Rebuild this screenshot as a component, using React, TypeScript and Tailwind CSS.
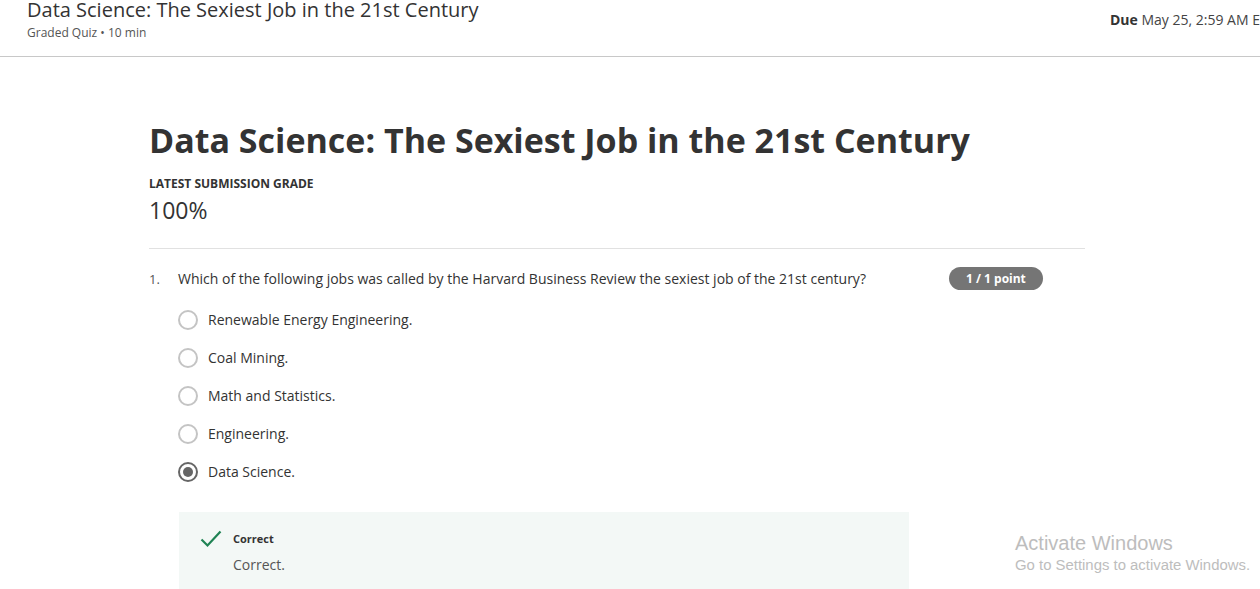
import React from 'react';

const options = [
  'Renewable Energy Engineering.',
  'Coal Mining.',
  'Math and Statistics.',
  'Engineering.',
  'Data Science.',
];

export default function App() {
  const selected = 4;

  return (
    <div className="relative h-[589px] w-[1260px] overflow-hidden bg-white text-[#333] font-['Open_Sans',sans-serif]">
      {/* Top header */}
      <header className="flex h-[57px] items-start justify-between border-b border-[#c8c8c8] pl-[27px]">
        <div>
          <h1 className="mt-[-3px] text-[20px] leading-[26px] text-[#333]">
            Data Science: The Sexiest Job in the 21st Century
          </h1>
          <p className="mt-[3px] text-[12px] leading-[14px] text-[#555]">Graded Quiz • 10 min</p>
        </div>
        <div className="mt-[10px] w-[150px] shrink-0 overflow-hidden whitespace-nowrap text-[14px] leading-[20px] text-[#444]">
          <span className="font-bold text-[#333]">Due</span> May 25, 2:59 AM EST
        </div>
      </header>

      {/* Main */}
      <main className="ml-[149px] w-[936px] pt-[61px]">
        <h2 className="text-[34px] font-bold leading-[44px] text-[#333]">
          Data Science: The Sexiest Job in the 21st Century
        </h2>
        <div className="mt-[14px] text-[12px] font-bold uppercase leading-[16px] text-[#333]">
          Latest Submission Grade
        </div>
        <div className="mt-[3px] text-[23px] leading-[30px] text-[#333]">100%</div>

        <div className="mt-[23px] border-t border-[#e1e1e1]" />

        {/* Question */}
        <div className="mt-[19px] flex items-start">
          <span className="w-[29px] text-[13px] leading-[22px] text-[#555]">1.</span>
          <p className="w-[740px] text-[14px] leading-[22px] text-[#333]">
            Which of the following jobs was called by the Harvard Business Review the sexiest job of the 21st century?
          </p>
          <span className="ml-[31px] mt-[-1px] rounded-full bg-[#757575] px-[17px] text-[12px] font-bold leading-[23px] text-white">
            1 / 1 point
          </span>
        </div>

        <div className="ml-[29px] mt-[20px] flex flex-col gap-[18px]">
          {options.map((o, i) => (
            <div key={o} className="flex h-[20px] items-center">
              <span
                className={
                  i === selected
                    ? 'flex h-[20px] w-[20px] items-center justify-center rounded-full border-2 border-[#666]'
                    : 'h-[20px] w-[20px] rounded-full border-2 border-[#c4c4c4]'
                }
              >
                {i === selected && <span className="h-[10px] w-[10px] rounded-full bg-[#666]" />}
              </span>
              <span className="ml-[10px] text-[14px] leading-[20px] text-[#333]">{o}</span>
            </div>
          ))}
        </div>

        {/* Feedback */}
        <div className="ml-[30px] mt-[30px] flex w-[730px] bg-[#f3f8f6] pb-[20px] pl-[21px] pt-[18px]">
          <svg width="22" height="18" viewBox="0 0 22 18">
            <path d="M1.5 9.5 L7.5 15.5 L20.5 1.5" fill="none" stroke="#1f8354" strokeWidth="2.2" />
          </svg>
          <div className="ml-[11px]">
            <div className="text-[11px] font-bold leading-[18px] text-[#333]">Correct</div>
            <div className="mt-[7px] text-[14px] leading-[20px] text-[#555]">Correct.</div>
          </div>
        </div>
      </main>

      {/* Windows watermark */}
      <div className="absolute left-[1015px] top-[531px] font-['Liberation_Sans',sans-serif] text-[#bdbdbd]">
        <div className="text-[20px] leading-[24px]">Activate Windows</div>
        <div className="text-[14.9px] leading-[20px]">Go to Settings to activate Windows.</div>
      </div>
    </div>
  );
}
